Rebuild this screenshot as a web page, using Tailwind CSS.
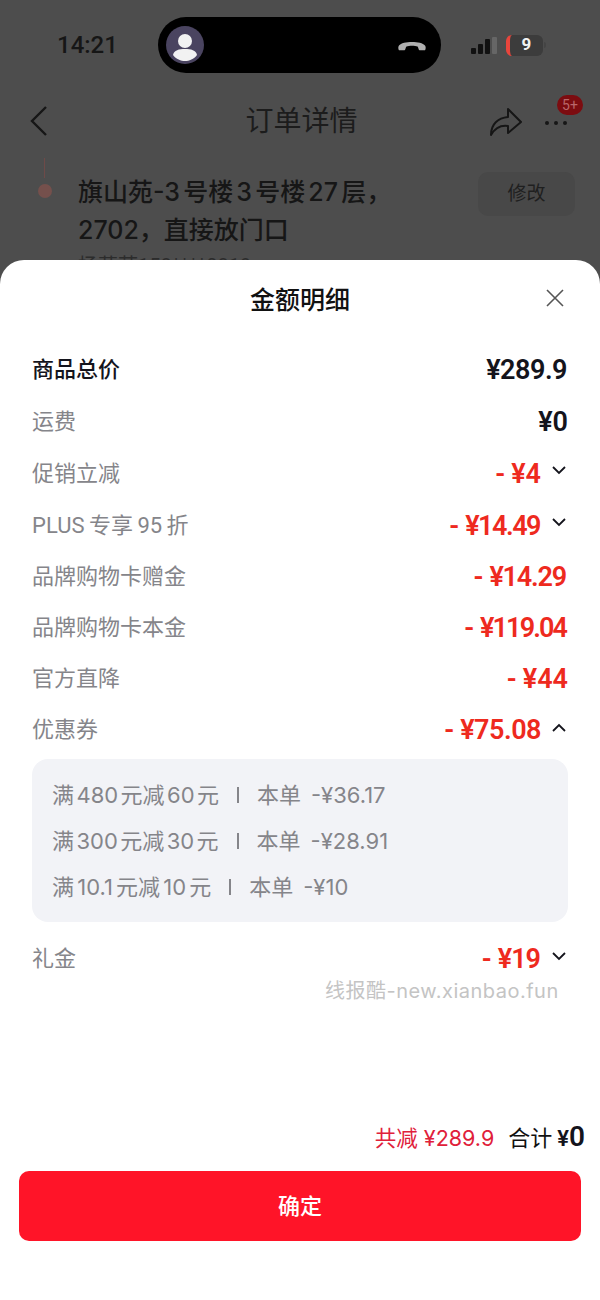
<!DOCTYPE html>
<html lang="zh-CN">
  <head>
    <meta charset="UTF-8" />
    <title>金额明细</title>
    <script src="https://cdn.jsdelivr.net/npm/@tailwindcss/browser@4"></script>
  </head>
  <body class="w-[600px] h-[1300px] overflow-hidden bg-[#4d4d4d] font-['Roboto','Noto_Sans_CJK_SC',sans-serif]">
    <!-- dimmed order page behind the sheet -->
    <div class="h-[260px] overflow-hidden">
      <div class="flex items-center h-[56px] mt-[17px] pl-[57px]">
        <span class="w-[101px] text-[24px] leading-none font-medium text-[#161616]">14:21</span>
        <div class="flex items-center justify-between w-[283px] h-[56px] px-[8px] rounded-full bg-black">
          <svg width="38" height="38" viewBox="0 0 38 38">
            <circle cx="19" cy="19" r="19" fill="#4a4460" />
            <circle cx="19" cy="15" r="7" fill="#f2f2f2" />
            <path d="M7 29c1-5 6-6 12-6s11 1 12 6c-3 4-8 6-12 6s-9-2-12-6z" fill="#f2f2f2" />
          </svg>
          <svg width="32" height="13" viewBox="0 0 32 14" class="mr-[5px]">
            <path d="M2 12c-1-1-1-4 0-5 4-5 24-5 28 0 1 1 1 4 0 5l-6 0c-1 0-1-3-2-4-3-1-9-1-12 0-1 1-1 4-2 4z" fill="#b0b0b0" />
          </svg>
        </div>
        <div class="flex items-end gap-[2px] ml-[30px] h-[17px]">
          <span class="w-[5px] h-[6px] rounded-[1px] bg-[#111]"></span>
          <span class="w-[5px] h-[10px] rounded-[1px] bg-[#111]"></span>
          <span class="w-[5px] h-[15px] rounded-[1px] bg-[#111]"></span>
          <span class="w-[5px] h-[17px] rounded-[1px] bg-[#666]"></span>
        </div>
        <div class="flex items-center justify-center w-[37px] h-[21px] ml-[9px] rounded-[6px] bg-[#3c3c3c] border-l-[4px] border-[#e8453c] text-[17px] font-bold text-[#f2f2f2]">9</div>
        <span class="w-[2px] h-[6px] ml-px rounded-r-full bg-[#444]"></span>
      </div>
      <div class="relative flex items-center justify-center h-[44px] mt-[27px] pl-[3px]">
        <svg width="20" height="32" viewBox="0 0 20 32" class="absolute left-[29px] top-[5px]" fill="none" stroke="#161616" stroke-width="2.4">
          <path d="M17 2L3 16l14 14" />
        </svg>
        <span class="text-[28px] text-[#1c1c1c]">订单详情</span>
        <svg width="34" height="30" viewBox="0 0 34 30" class="absolute left-[489px] top-[7px]" fill="none" stroke="#161616" stroke-width="2">
          <path d="M19 2l13 13-13 11v-7C12 18 6 21 2 28c0-11 7-17 17-18z" stroke-linejoin="round" />
        </svg>
        <div class="absolute left-[545px] top-[21px] flex gap-[5px]">
          <span class="w-[4px] h-[4px] rounded-full bg-[#161616]"></span>
          <span class="w-[4px] h-[4px] rounded-full bg-[#161616]"></span>
          <span class="w-[4px] h-[4px] rounded-full bg-[#161616]"></span>
        </div>
        <span class="absolute left-[557px] top-[-5px] flex items-center justify-center w-[26px] h-[20px] rounded-full bg-[#7c0c10] text-[14px] text-[#b9676a]">5+</span>
      </div>
      <div class="relative mt-[14px] pl-[78px] pt-[15px]">
        <span class="absolute left-[44px] top-0 w-px h-[20px] bg-[#6e4a48]"></span>
        <span class="absolute left-[38px] top-[26px] w-[14px] h-[14px] rounded-full bg-[#75504c]"></span>
        <p class="w-[340px] font-['Inter','Noto_Sans_CJK_SC',sans-serif] text-[25px] leading-[38px] font-medium text-[#161616] [word-spacing:-3.5px]">旗山苑-3 号楼 3 号楼 27 层，<br />2702，直接放门口</p>
        <p class="mt-[3px] text-[20px] leading-[28px] text-[#2c2c2c]">杨荣萍158****0819</p>
        <span class="absolute left-[478px] top-[14px] flex items-center justify-center w-[97px] h-[44px] rounded-[10px] bg-[#484848] text-[19px] text-[#1f1f1f]">修改</span>
      </div>
    </div>

    <!-- amount detail sheet -->
    <div class="relative h-[1040px] rounded-t-[24px] bg-white">
      <div class="flex items-center justify-center h-[82px]">
        <h2 class="text-[25px] font-medium text-[#111]">金额明细</h2>
        <svg width="18" height="18" viewBox="0 0 18 18" class="absolute left-[546px] top-[29px]" stroke="#555" stroke-width="1.6">
          <path d="M1 1l16 16M17 1L1 17" />
        </svg>
      </div>
      <div class="px-[32px] pt-[2px] text-[22px]">
        <div class="flex items-center justify-between h-[51px]">
          <span class="font-medium text-[#14141c]">商品总价</span>
          <span class="pt-[2px] pr-[1px] text-[27px] tracking-[-0.5px] font-semibold text-[#14141c]">¥289.9</span>
        </div>
        <div class="flex items-center justify-between h-[52px] text-[#85858a]">
          <span>运费</span>
          <span class="pt-[2px] text-[27px] font-semibold text-[#14141c]">¥0</span>
        </div>
        <div class="flex items-center justify-between h-[52px] text-[#85858a]">
          <span>促销立减</span>
          <div class="flex items-center pt-[2px] text-[27px] font-semibold text-[#ee2a1e]">
            <span class="mr-[6px]">-</span><span>¥4</span>
            <svg width="14" height="9" viewBox="0 0 14 9" class="ml-[11px] mr-[2px] mb-[7px]" fill="none" stroke="#14141c" stroke-width="1.8"><path d="M1 1l6 6 6-6" /></svg>
          </div>
        </div>
        <div class="flex items-center justify-between h-[52px] text-[#85858a]">
          <span class="[word-spacing:-1px]">PLUS 专享 95 折</span>
          <div class="flex items-center pt-[2px] text-[27px] font-semibold text-[#ee2a1e]">
            <span class="mr-[6px]">-</span><span class="tracking-[-1.5px]">¥14.49</span>
            <svg width="14" height="9" viewBox="0 0 14 9" class="ml-[12px] mr-[2px] mb-[7px]" fill="none" stroke="#14141c" stroke-width="1.8"><path d="M1 1l6 6 6-6" /></svg>
          </div>
        </div>
        <div class="flex items-center justify-between h-[51px] text-[#85858a]">
          <span>品牌购物卡赠金</span>
          <div class="flex items-center pt-[2px] pr-[2px] text-[27px] font-semibold text-[#ee2a1e]">
            <span class="mr-[6px]">-</span><span class="tracking-[-1.2px]">¥14.29</span>
          </div>
        </div>
        <div class="flex items-center justify-between h-[51px] text-[#85858a]">
          <span>品牌购物卡本金</span>
          <div class="flex items-center pt-[2px] pr-[2px] text-[27px] font-semibold text-[#ee2a1e]">
            <span class="mr-[6px]">-</span><span class="tracking-[-1.9px]">¥119.04</span>
          </div>
        </div>
        <div class="flex items-center justify-between h-[51px] text-[#85858a]">
          <span>官方直降</span>
          <div class="flex items-center pt-[2px] text-[27px] font-semibold text-[#ee2a1e]">
            <span class="mr-[6px]">-</span><span>¥44</span>
          </div>
        </div>
        <div class="flex items-center justify-between h-[51px] text-[#85858a]">
          <span>优惠券</span>
          <div class="flex items-center pt-[2px] text-[27px] font-semibold text-[#ee2a1e]">
            <span class="mr-[6px]">-</span><span class="tracking-[-0.5px]">¥75.08</span>
            <svg width="14" height="9" viewBox="0 0 14 9" class="ml-[11px] mr-[2px] mb-[7px]" fill="none" stroke="#14141c" stroke-width="1.8"><path d="M1 8l6-6 6 6" /></svg>
          </div>
        </div>
        <div class="mt-[4px] h-[163px] pt-[13px] pl-[20px] rounded-[16px] bg-[#f2f3f7] font-['Inter','Noto_Sans_CJK_SC',sans-serif] text-[#85858a]">
          <div class="flex items-center h-[46px]"><span class="[word-spacing:-3.75px]">满 480 元减 60 元</span><span class="mx-[18px] w-[2px] h-[16px] bg-[#85858a]"></span><span>本单</span><span class="ml-[10px]">-¥36.17</span></div>
          <div class="flex items-center h-[46px]"><span class="[word-spacing:-3.75px]">满 300 元减 30 元</span><span class="mx-[18px] w-[2px] h-[16px] bg-[#85858a]"></span><span>本单</span><span class="ml-[10px]">-¥28.91</span></div>
          <div class="flex items-center h-[46px]"><span class="[word-spacing:-3px]">满 10.1 元减 10 元</span><span class="mx-[18px] w-[2px] h-[16px] bg-[#85858a]"></span><span>本单</span><span class="ml-[10px]">-¥10</span></div>
        </div>
        <div class="flex items-center justify-between h-[51px] mt-[11px] text-[#85858a]">
          <span>礼金</span>
          <div class="flex items-center pt-[2px] text-[27px] font-semibold text-[#ee2a1e]">
            <span class="mr-[6px]">-</span><span class="tracking-[-1px]">¥19</span>
            <svg width="14" height="9" viewBox="0 0 14 9" class="ml-[12px] mr-[2px] mb-[7px]" fill="none" stroke="#14141c" stroke-width="1.8"><path d="M1 1l6 6 6-6" /></svg>
          </div>
        </div>
      </div>
      <span class="absolute left-[325px] top-[716px] font-['Inter','Noto_Sans_CJK_SC',sans-serif] text-[20px] tracking-[0.5px] text-[#c4c4c4]">线报酷-new.xianbao.fun</span>
      <div class="flex items-baseline justify-end mt-[132px] pr-[15px] h-[42px]">
        <span class="font-['Inter','Noto_Sans_CJK_SC',sans-serif] text-[21.5px] text-[#e0203a]">共减 ¥289.9</span>
        <span class="ml-[14px] text-[22px] text-[#111]">合计</span>
        <span class="ml-[5px] text-[22px] font-semibold text-[#14141c]">¥</span>
        <span class="text-[28px] font-semibold text-[#14141c]">0</span>
      </div>
      <button class="block mt-[13px] mx-[19px] w-[562px] h-[70px] rounded-[10px] bg-[#ff1428] text-[22px] font-medium text-[#fff]">确定</button>
    </div>
  </body>
</html>
